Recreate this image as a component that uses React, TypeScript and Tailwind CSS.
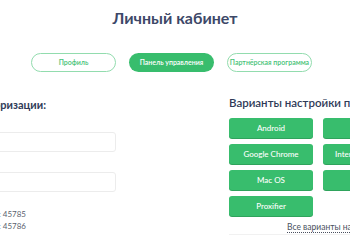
import React from 'react';

const tabs = [
  { label: 'Профиль', active: false },
  { label: 'Панель управления', active: true },
  { label: 'Партнёрская программа', active: false },
];

const setups = ['Android', 'iOS', 'Google Chrome', 'Internet Explorer', 'Mac OS', 'Linux', 'Proxifier'];

export default function App() {
  return (
    <div className="w-[350px] h-[250px] overflow-hidden bg-white font-['Lato','Noto_Sans',sans-serif] text-[#3b4566]">
      <h1 className="pt-[8px] text-center text-[16px] leading-[20px] font-bold text-[#3d4868]">Личный кабинет</h1>

      {/* tabs */}
      <div className="mt-[25px] flex gap-[13px] pl-[31px]">
        {tabs.map((t) => (
          <button
            key={t.label}
            className={
              t.active
                ? 'w-[85px] h-[19px] rounded-full bg-[#38bd6d] text-white text-[7px] font-semibold whitespace-nowrap'
                : 'w-[85px] h-[19px] rounded-full border border-[#92dcae] text-[#45c276] text-[7px] font-semibold whitespace-nowrap'
            }
          >
            {t.label}
          </button>
        ))}
      </div>

      <div className="mt-[24px] flex">
        {/* auth data, mostly off screen */}
        <div className="w-[116px] shrink-0 overflow-hidden">
          <h2 className="mt-[2px] w-[46px] flex justify-end whitespace-nowrap text-[11px] leading-[14px] font-bold text-[#2f3a57]">
            Данные для авторизации:
          </h2>
          <div className="mt-[20px] ml-[-20px] h-[20px] rounded-[3px] border border-[#ececec]" />
          <div className="mt-[20px] ml-[-20px] h-[20px] rounded-[3px] border border-[#ececec]" />
          <div className="mt-[16px] text-[8px] leading-[12px] text-[#5a5f6e]">
            <div className="w-[26px] flex justify-end whitespace-nowrap">HTTP порт: 45785</div>
            <div className="w-[26px] flex justify-end whitespace-nowrap">SOCKS порт: 45786</div>
          </div>
        </div>

        {/* setup variants */}
        <div className="ml-[113px] shrink-0 w-[260px]">
          <h2 className="whitespace-nowrap text-[11.5px] leading-[14px] font-semibold text-[#2f3a57]">
            Варианты настройки прокси:
          </h2>
          <div className="mt-[8px] grid grid-cols-[84px_84px] gap-x-[10px] gap-y-[6px]">
            {setups.map((s) => (
              <button
                key={s}
                className="h-[20px] rounded-[3px] bg-[#38bd6d] text-white text-[8px] font-medium whitespace-nowrap overflow-hidden shadow-[0_1px_0_#2fa35c]"
              >
                {s}
              </button>
            ))}
          </div>
          <div className="mt-[5px] pl-[58px] text-[8.5px] leading-[12px] text-[#4a5060] whitespace-nowrap">
            <span className="underline decoration-dotted underline-offset-2">Все варианты настройки</span>
          </div>
          <div className="mt-[1px] border-t border-[#f1f1f1]" />
        </div>
      </div>
    </div>
  );
}
